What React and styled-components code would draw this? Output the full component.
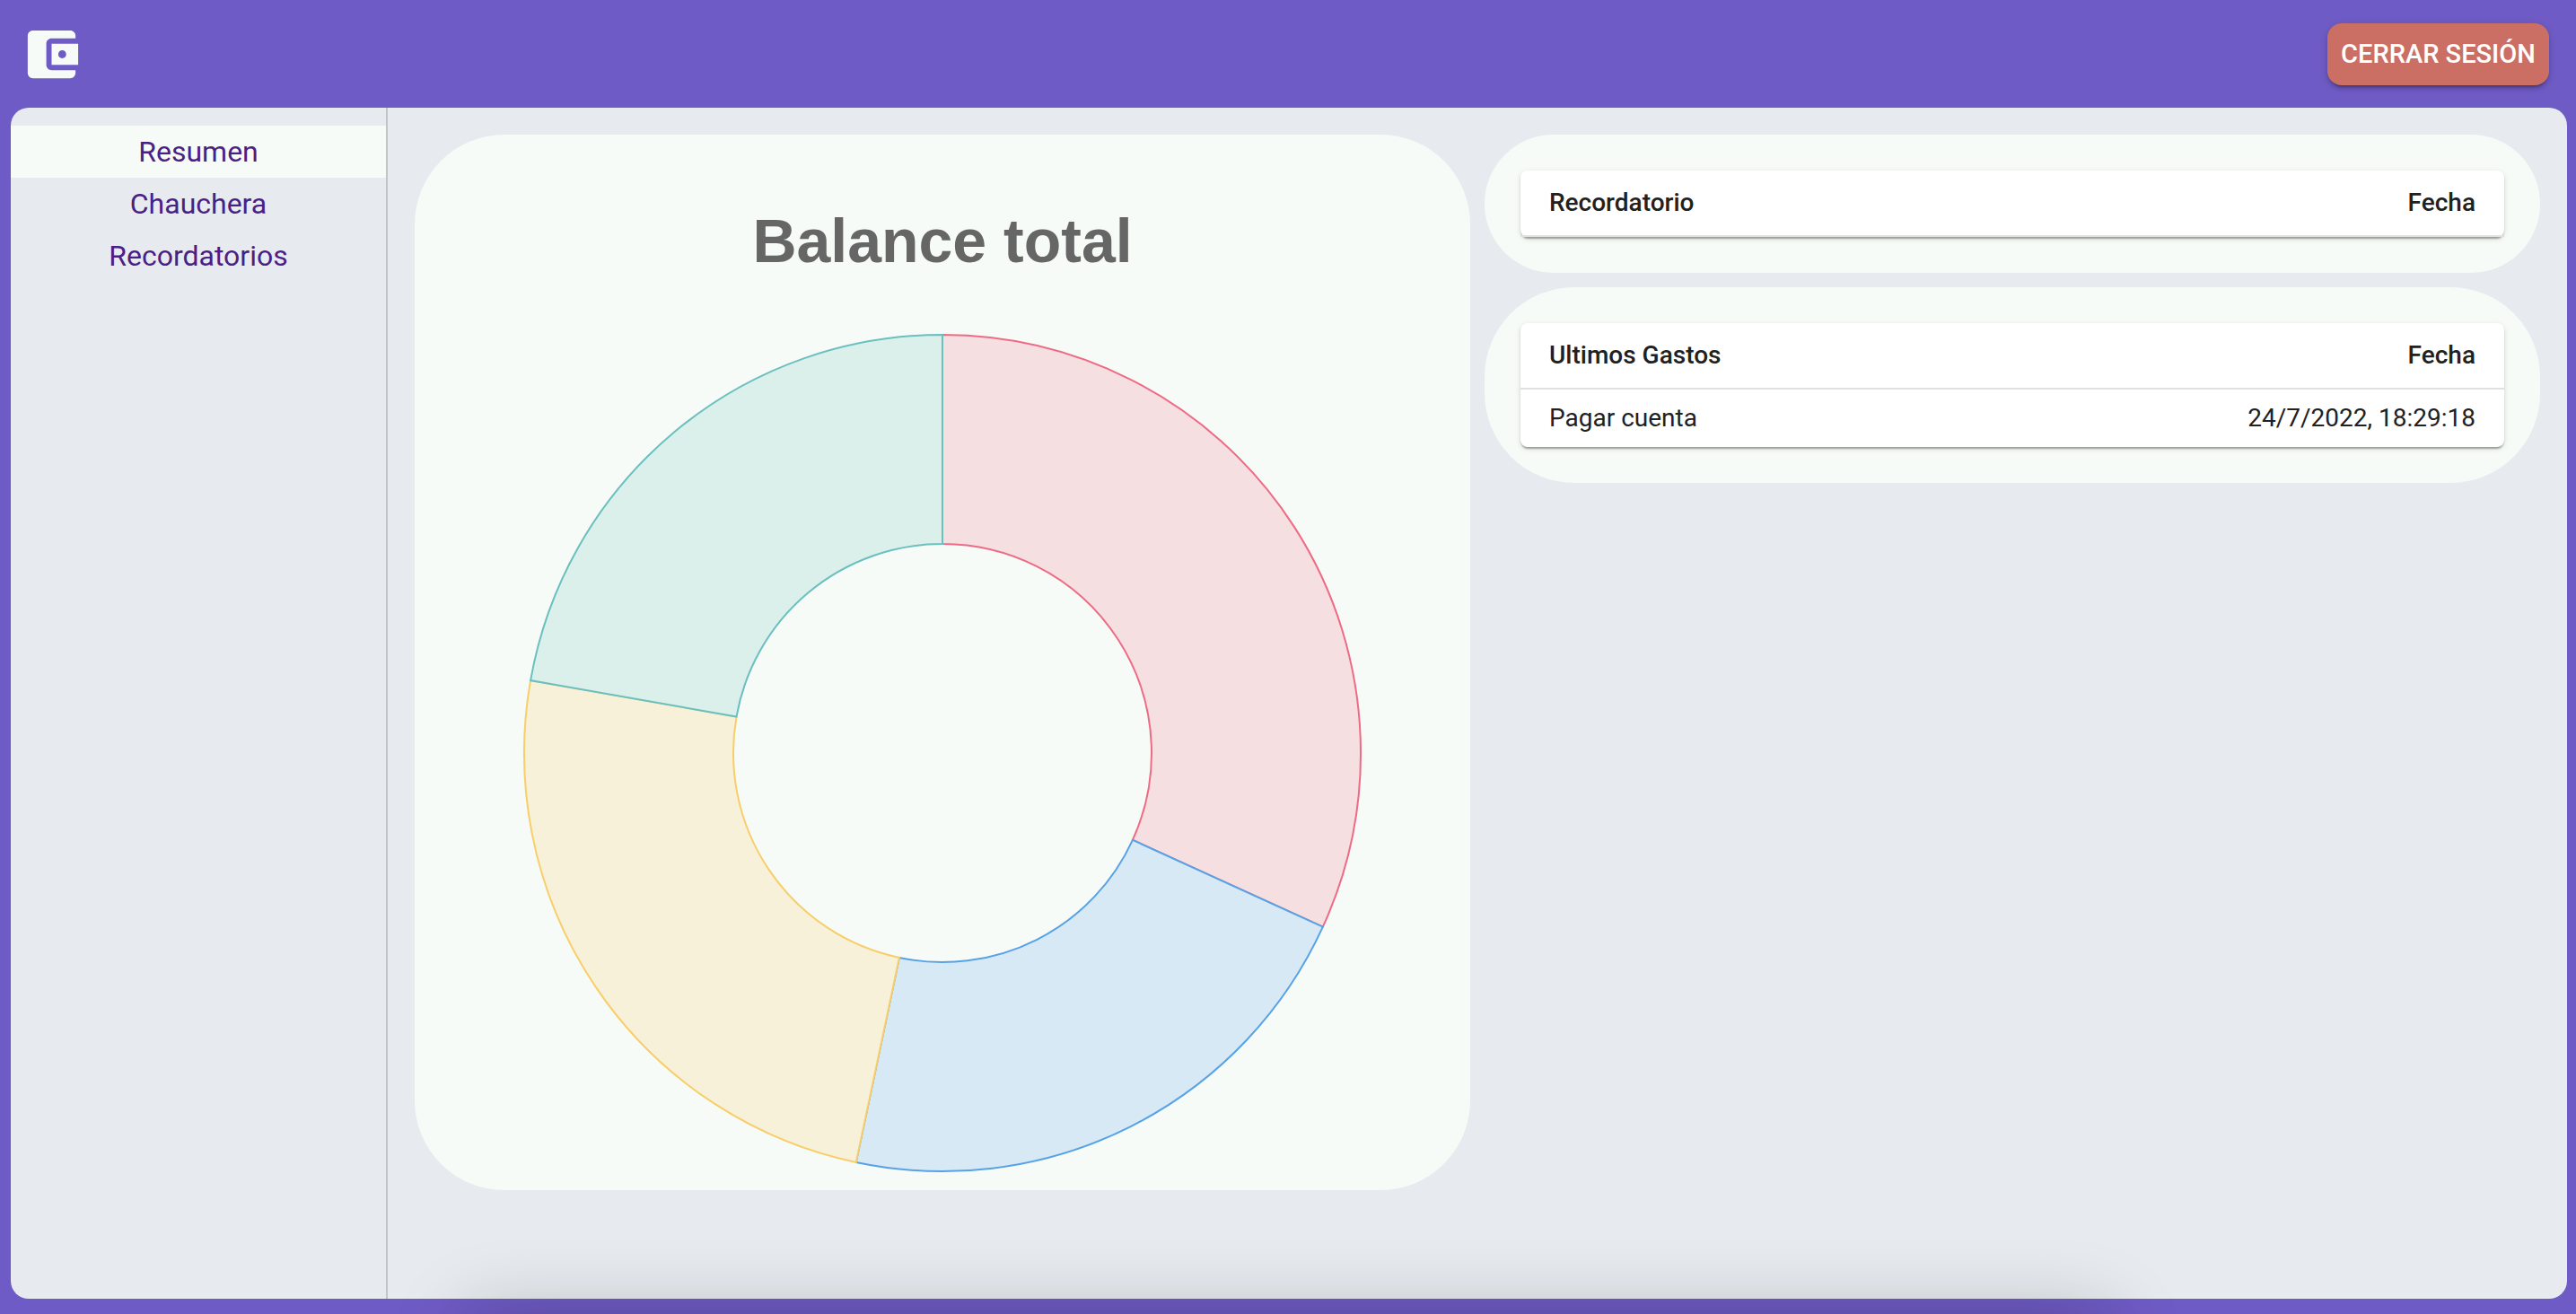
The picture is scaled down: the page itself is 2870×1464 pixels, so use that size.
import React from "react";
import styled, { createGlobalStyle } from "styled-components";

const colors = {
  brand: "#6f5bc5",
  surface: "#e7ebef",
  card: "#f6fbf7",
  link: "#4b1f85",
  danger: "#cb6f64",
  ink: "#212121",
  title: "#666666",
};

const GlobalStyle = createGlobalStyle`
  *, *::before, *::after { box-sizing: border-box; }
  body {
    margin: 0;
    background: ${colors.brand};
    font-family: Roboto, "Liberation Sans", sans-serif;
    color: ${colors.ink};
  }
`;

const Page = styled.div`
  display: flex;
  flex-direction: column;
  min-height: 100vh;
`;

const Header = styled.header`
  display: flex;
  align-items: center;
  justify-content: space-between;
  padding: 25px 30px 24px 22px;
`;

const HomeLink = styled.a`
  display: flex;
  color: ${colors.card};
`;

const WalletIcon = styled.svg`
  width: 71px;
  height: 71px;
  fill: currentColor;
`;

const LogoutButton = styled.button`
  min-width: 247px;
  padding: 10px 12px;
  border: 0;
  border-radius: 16px;
  background: ${colors.danger};
  color: #ffffff;
  font: 500 29px/49px Roboto, "Liberation Sans", sans-serif;
  text-transform: uppercase;
  white-space: nowrap;
  cursor: pointer;
  box-shadow: 0 6px 2px -4px rgba(0, 0, 0, 0.2), 0 4px 4px rgba(0, 0, 0, 0.14),
    0 2px 10px rgba(0, 0, 0, 0.12);
`;

const Body = styled.div`
  flex: 1;
  display: flex;
  margin: 0 10px 17px 12px;
  border-radius: 20px;
  background: ${colors.surface};
  overflow: hidden;
`;

const Sidebar = styled.nav`
  flex: 0 0 420px;
  padding-top: 20px;
  border-right: 2px solid #c2c4c6;
`;

const NavLink = styled.a`
  display: block;
  padding: 10px;
  background: ${(p) => (p.$active ? colors.card : "transparent")};
  color: ${colors.link};
  font-size: 32px;
  line-height: 38px;
  text-align: center;
  text-decoration: none;
`;

const Content = styled.main`
  flex: 1;
  display: grid;
  grid-template-columns: repeat(2, minmax(0, 1fr));
  align-items: start;
  gap: 16px;
  padding: 30px;
`;

const Column = styled.div`
  display: flex;
  flex-direction: column;
  gap: 16px;
`;

const Card = styled.section`
  padding: ${(p) => p.$padding};
  border-radius: 100px;
  background: ${colors.card};
`;

const ChartTitle = styled.h1`
  margin: 0 0 60px;
  color: ${colors.title};
  font: 700 68px/85px "Liberation Sans", Arial, sans-serif;
  text-align: center;
`;

const Chart = styled.svg`
  display: block;
  width: 100%;
`;

const Table = styled.table`
  width: 100%;
  border-collapse: separate;
  border-spacing: 0;
  border-radius: 8px;
  background: #ffffff;
  font-size: 28px;
  box-shadow: 0 4px 2px -2px rgba(0, 0, 0, 0.2), 0 2px 2px rgba(0, 0, 0, 0.14),
    0 2px 6px rgba(0, 0, 0, 0.12);
`;

const HeadCell = styled.th`
  padding: 12px 32px;
  border-bottom: 2px solid #e0e0e0;
  font-weight: 500;
  line-height: 48px;
  text-align: ${(p) => p.$align || "left"};
`;

const Cell = styled.td`
  padding: 12px 32px;
  line-height: 40px;
  text-align: ${(p) => p.$align || "left"};
`;

const BottomShade = styled.div`
  position: fixed;
  top: 100%;
  left: 520px;
  right: 520px;
  height: 100px;
  pointer-events: none;
  box-shadow: 0 0 84px rgba(0, 0, 0, 0.22);
`;

const slices = [
  { value: 1432, fill: "#f6dfe1", stroke: "#ee6b85" },
  { value: 967, fill: "#d7e9f5", stroke: "#57a2e7" },
  { value: 1101, fill: "#f8f1da", stroke: "#f8ce6a" },
  { value: 1000, fill: "#dbefeb", stroke: "#6abfbf" },
];

const OUTER = 466;
const INNER = 233;

const point = (radius, turn) => {
  const a = turn * 2 * Math.PI;
  return `${radius * Math.sin(a)} ${-radius * Math.cos(a)}`;
};

const arcPath = (from, to) => {
  const large = to - from > 0.5 ? 1 : 0;
  return [
    `M ${point(OUTER, from)}`,
    `A ${OUTER} ${OUTER} 0 ${large} 1 ${point(OUTER, to)}`,
    `L ${point(INNER, to)}`,
    `A ${INNER} ${INNER} 0 ${large} 0 ${point(INNER, from)}`,
    "Z",
  ].join(" ");
};

function Doughnut({ data }) {
  const total = data.reduce((sum, s) => sum + s.value, 0);
  let turn = 0;
  return (
    <Chart viewBox="-468 -468 936 936" role="img" aria-labelledby="balance">
      {data.map((s) => {
        const from = turn;
        turn += s.value / total;
        return (
          <path
            key={s.stroke}
            d={arcPath(from, turn)}
            fill={s.fill}
            stroke={s.stroke}
            strokeWidth="2"
          />
        );
      })}
    </Chart>
  );
}

function DateTable({ title, rows }) {
  return (
    <Card $padding="40px">
      <Table>
        <thead>
          <tr>
            <HeadCell scope="col">{title}</HeadCell>
            <HeadCell scope="col" $align="right">
              Fecha
            </HeadCell>
          </tr>
        </thead>
        <tbody>
          {rows.map((row) => (
            <tr key={row.name}>
              <Cell>{row.name}</Cell>
              <Cell $align="right">{row.date}</Cell>
            </tr>
          ))}
        </tbody>
      </Table>
    </Card>
  );
}

export default function App() {
  return (
    <Page>
      <GlobalStyle />
      <Header>
        <HomeLink href="#inicio" aria-label="Inicio">
          <WalletIcon viewBox="0 0 24 24" aria-hidden="true">
            <path d="M21 18v1c0 1.1-.9 2-2 2H5c-1.11 0-2-.9-2-2V5c0-1.1.89-2 2-2h14c1.1 0 2 .9 2 2v1h-9c-1.11 0-2 .9-2 2v8c0 1.1.89 2 2 2h9zm-9-2h10V8H12v8zm4-2.500c-.83 0-1.500-.67-1.500-1.500s.67-1.500 1.500-1.500 1.500.67 1.500 1.500-.67 1.500-1.500 1.500z" />
          </WalletIcon>
        </HomeLink>
        <LogoutButton type="button">Cerrar sesión</LogoutButton>
      </Header>
      <Body>
        <Sidebar>
          <NavLink href="#resumen" $active aria-current="page">
            Resumen
          </NavLink>
          <NavLink href="#chauchera">Chauchera</NavLink>
          <NavLink href="#recordatorios">Recordatorios</NavLink>
        </Sidebar>
        <Content>
          <Card $padding="76px 120px 19px">
            <ChartTitle id="balance">Balance total</ChartTitle>
            <Doughnut data={slices} />
          </Card>
          <Column>
            <DateTable title="Recordatorio" rows={[]} />
            <DateTable
              title="Ultimos Gastos"
              rows={[{ name: "Pagar cuenta", date: "24/7/2022, 18:29:18" }]}
            />
          </Column>
        </Content>
      </Body>
      <BottomShade />
    </Page>
  );
}
